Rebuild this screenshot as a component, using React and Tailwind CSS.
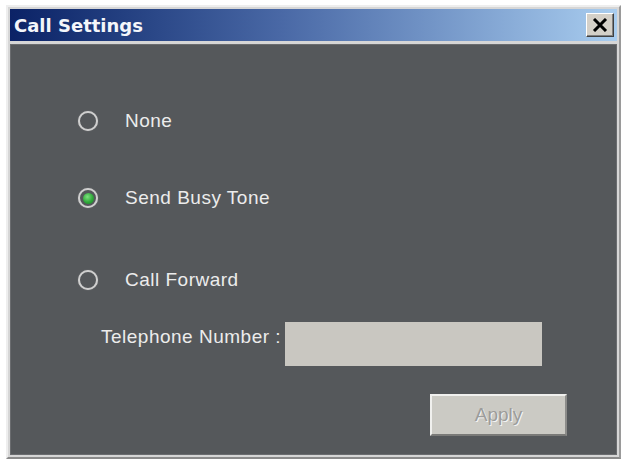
import React, { useState } from 'react';

const Radio = ({ checked, label, onClick }) => (
    <div className="flex items-center h-[24px] cursor-pointer" onClick={onClick}>
        <span className="w-[20px] h-[20px] rounded-full border-2 border-[#cfcfcf] bg-[#54575a] flex items-center justify-center shadow-[0_0_1px_#9a9a9a]">
            {checked && (
                <span className="w-[11px] h-[11px] rounded-full bg-[radial-gradient(circle_at_40%_35%,#7ee27e,#2fa83a_55%,#1d7a2a)]"></span>
            )}
        </span>
        <span className="ml-[27px] text-[19px] leading-[24px] tracking-[0.5px] text-[#ececec]">{label}</span>
    </div>
);

const App = () => {
    const [mode, setMode] = useState('busy');

    return (
        <div className="w-[623px] h-[462px] bg-white pl-[6px] pt-[5px] font-['Liberation_Sans',Arial,sans-serif]">
            <div className="w-[615px] h-[454px] flex flex-col bg-[#d6d6d6] border-l-[2px] border-t-[2px] border-[#eeeeee] border-r-[2px] border-r-[#9a9a9a] border-b-[2px] border-b-[#8a8a8a] p-[2px]">
                {/* title bar */}
                <div className="h-[32px] flex items-center justify-between pl-[4px] pr-[3px] bg-gradient-to-r from-[#0b2266] via-[#4a69a6] via-45% to-[#a9cdef]">
                    <span className="font-['DejaVu_Sans',Verdana,sans-serif] font-bold text-[18px] text-[#f4f6fa]">Call Settings</span>
                    <button className="w-[28px] h-[24px] bg-[#d4d0c8] border-t border-l border-white border-r border-b border-r-[#404040] border-b-[#404040] shadow-[inset_-1px_-1px_0_#808080] flex items-center justify-center">
                        <svg width="16" height="14" viewBox="0 0 16 14">
                            <path d="M2 1 L14 13 M14 1 L2 13" stroke="#000" strokeWidth="3" />
                        </svg>
                    </button>
                </div>
                {/* body */}
                <div className="flex-1 mt-[3px] bg-[#55585b] border border-[#6a6c6f] pt-[64px]">
                    <div className="pl-[67px]">
                        <Radio label="None" checked={mode === 'none'} onClick={() => setMode('none')} />
                        <div className="h-[53px]"></div>
                        <Radio label="Send Busy Tone" checked={mode === 'busy'} onClick={() => setMode('busy')} />
                        <div className="h-[58px]"></div>
                        <Radio label="Call Forward" checked={mode === 'forward'} onClick={() => setMode('forward')} />
                    </div>
                    <div className="flex items-start pl-[90px] mt-[30px]">
                        <span className="mt-[3px] text-[19px] leading-[24px] tracking-[0.5px] text-[#ececec] whitespace-nowrap">Telephone Number :</span>
                        <div className="ml-[4px] w-[257px] h-[44px] bg-[#c9c7c1]"></div>
                    </div>
                    <div className="flex justify-end pr-[49px] mt-[28px]">
                        <button className="w-[137px] h-[42px] bg-[#cbcac4] border-t-2 border-l-2 border-[#f0f0ee] border-r-2 border-b-2 border-r-[#8c8c8a] border-b-[#7a7a78] text-[19px] text-[#9c9c9a] [text-shadow:1px_1px_0_#f4f4f4]">
                            Apply
                        </button>
                    </div>
                </div>
            </div>
        </div>
    );
};

export default App;
